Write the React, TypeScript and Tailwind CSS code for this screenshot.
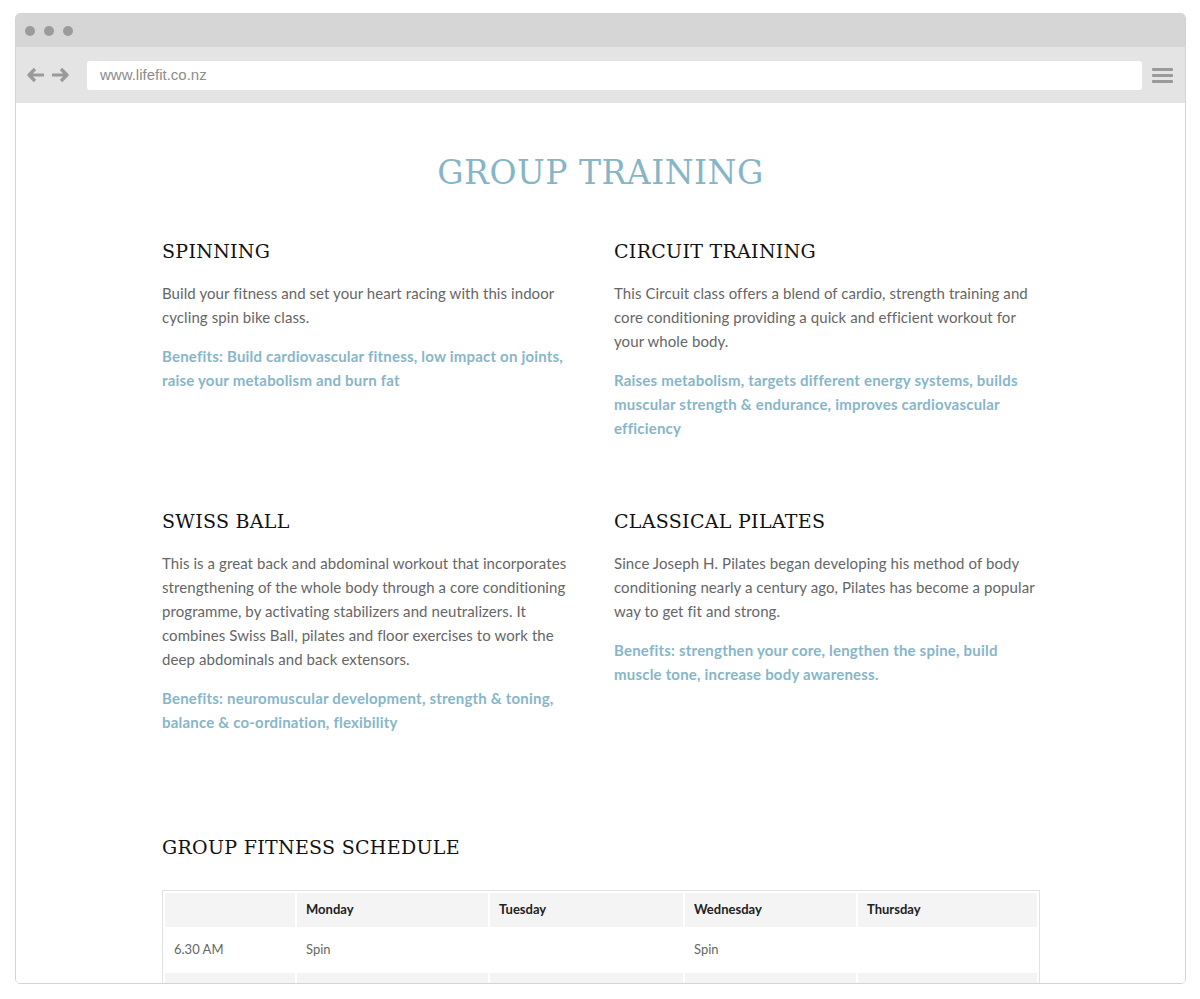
import React from "react";

type Block = {
  title: string;
  body: string;
  benefits: string;
};

const blocks: Block[] = [
  {
    title: "SPINNING",
    body: "Build your fitness and set your heart racing with this indoor cycling spin bike class.",
    benefits: "Benefits: Build cardiovascular fitness, low impact on joints, raise your metabolism and burn fat",
  },
  {
    title: "CIRCUIT TRAINING",
    body: "This Circuit class offers a blend of cardio, strength training and core conditioning providing a quick and efficient workout for your whole body.",
    benefits: "Raises metabolism, targets different energy systems, builds muscular strength & endurance, improves cardiovascular efficiency",
  },
  {
    title: "SWISS BALL",
    body: "This is a great back and abdominal workout that incorporates strengthening of the whole body through a core conditioning programme, by activating stabilizers and neutralizers. It combines Swiss Ball, pilates and floor exercises to work the deep abdominals and back extensors.",
    benefits: "Benefits: neuromuscular development, strength & toning, balance & co-ordination, flexibility",
  },
  {
    title: "CLASSICAL PILATES",
    body: "Since Joseph H. Pilates began developing his method of body conditioning nearly a century ago, Pilates has become a popular way to get fit and strong.",
    benefits: "Benefits: strengthen your core, lengthen the spine, build muscle tone, increase body awareness.",
  },
];

const days = ["Monday", "Tuesday", "Wednesday", "Thursday"];

// second row is cut off by the window edge, so only its stripe shows
const rows = [
  ["6.30 AM", "Spin", "", "Spin", ""],
  ["", "", "", "", ""],
];

const BrowserChrome = () => (
  <>
    <div className="h-[33px] bg-[#d6d6d6] flex items-center gap-[9px] pl-[9px]">
      <span className="w-[10px] h-[10px] rounded-full bg-[#9b9b9b]" />
      <span className="w-[10px] h-[10px] rounded-full bg-[#9b9b9b]" />
      <span className="w-[10px] h-[10px] rounded-full bg-[#9b9b9b]" />
    </div>
    <div className="h-[56px] bg-[#e4e4e4] flex items-center pl-[11px] pr-[12px]">
      <div className="flex items-center gap-[6px] w-[60px]">
        <svg width="18" height="16" viewBox="0 0 18 16">
          <path d="M8 2 L2 8 L8 14 M2 8 H17" stroke="#9a9a9a" strokeWidth="3.2" fill="none" strokeLinejoin="round" />
        </svg>
        <svg width="18" height="16" viewBox="0 0 18 16">
          <path d="M10 2 L16 8 L10 14 M16 8 H1" stroke="#9a9a9a" strokeWidth="3.2" fill="none" strokeLinejoin="round" />
        </svg>
      </div>
      <div className="flex-1 h-[29px] bg-white rounded-[3px] flex items-center pl-[13px] text-[15px] text-[#8c8c8c] font-['Liberation_Sans',sans-serif]">
        www.lifefit.co.nz
      </div>
      <div className="w-[31px] flex flex-col items-end gap-[3px]">
        <span className="w-[21px] h-[3px] rounded-[1px] bg-[#9a9a9a]" />
        <span className="w-[21px] h-[3px] rounded-[1px] bg-[#9a9a9a]" />
        <span className="w-[21px] h-[3px] rounded-[1px] bg-[#9a9a9a]" />
      </div>
    </div>
  </>
);

const ClassBlock = ({ block }: { block: Block }) => (
  <div>
    <h2 className="font-['DejaVu_Serif',serif] text-[19px] leading-[26px] text-[#111] tracking-[0.3px]">
      {block.title}
    </h2>
    <p className="mt-[17px] text-[15px] leading-[24px] tracking-[0.08px] text-[#666]">{block.body}</p>
    <p className="mt-[15px] text-[15px] leading-[24px] tracking-[0.2px] font-bold text-[#87b6c9]">
      {block.benefits}
    </p>
  </div>
);

export default function App() {
  return (
    <div className="w-[1200px] h-[999px] bg-white pt-[13px] pl-[15px] font-['Lato',sans-serif]">
      <div className="w-[1171px] h-[971px] flex flex-col border border-[#d4d4d4] rounded-[5px] overflow-hidden">
        <BrowserChrome />
        <div className="flex-1 bg-white overflow-hidden">
          <h1 className="mt-[50px] text-center font-['DejaVu_Serif',serif] text-[33px] leading-[40px] text-[#86b5c7] tracking-[0.5px]">
            GROUP TRAINING
          </h1>
          <div className="w-[878px] ml-[146px]">
            <div className="mt-[45px] grid grid-cols-2 gap-x-[26px] gap-y-[68px]">
              {blocks.map((b) => (
                <ClassBlock key={b.title} block={b} />
              ))}
            </div>
            <h2 className="mt-[100px] font-['DejaVu_Serif',serif] text-[19px] leading-[26px] text-[#111] tracking-[0.3px]">
              GROUP FITNESS SCHEDULE
            </h2>
            <table className="mt-[30px] w-[878px] border border-[#e2e2e2] border-separate border-spacing-[2px] text-[13px]">
              <thead>
                <tr className="bg-[#f4f4f4]">
                  <th className="w-[130px] h-[34px]" />
                  {days.map((d, i) => (
                    <th
                      key={d}
                      className={`text-left font-bold text-[#222] pl-[9px] ${
                        i === 0 ? "w-[191px]" : i === 1 ? "w-[193px]" : i === 2 ? "w-[171px]" : ""
                      }`}
                    >
                      {d}
                    </th>
                  ))}
                </tr>
              </thead>
              <tbody>
                {rows.map((r, ri) => (
                  <tr key={ri} className={ri % 2 === 1 ? "bg-[#f4f4f4]" : "bg-white"}>
                    {r.map((c, ci) => (
                      <td key={ci} className="h-[42px] pl-[9px] text-[#666]">
                        {c}
                      </td>
                    ))}
                  </tr>
                ))}
              </tbody>
            </table>
          </div>
        </div>
      </div>
    </div>
  );
}
